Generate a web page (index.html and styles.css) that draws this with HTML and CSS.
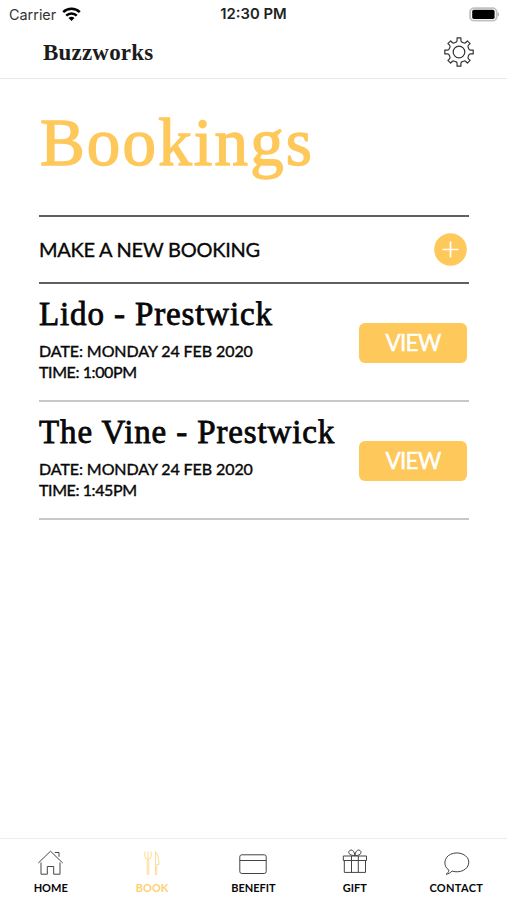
FILE: index.html
```html
<!DOCTYPE html>
<html lang="en">
<head>
<meta charset="utf-8">
<meta name="viewport" content="width=device-width, initial-scale=1">
<title>Buzzworks Bookings</title>
<link rel="stylesheet" href="styles.css">
</head>
<body>
<div class="status">
  <div class="carrier"><span>Carrier</span>
    <svg class="wifi" width="19" height="15" viewBox="0 0 19 15" fill="none" stroke="#000" stroke-width="2.5"><path d="M1.2 5.2C5.8.7 13.2.7 17.8 5.2M4.2 8.6C7.2 5.7 11.8 5.7 14.8 8.6"/><path d="M6.5 11Q9.5 8.5 12.5 11L9.5 14Z" fill="#000" stroke="none"/></svg>
  </div>
  <span class="clock">12:30 PM</span>
  <svg class="battery" width="31" height="15" viewBox="0 0 31 15"><rect x="1.1" y="1.1" width="26.6" height="12.6" rx="4" fill="#fff" stroke="#c2c2c2" stroke-width="1.8"/><rect x="3.2" y="2.7" width="22.4" height="9.4" rx="1.8"/><path d="M28.7 5Q31.3 7.4 28.7 9.8Z" fill="#aaa"/></svg>
</div>
<header class="header">
  <div class="brand">Buzzworks</div>
  <svg class="gear" width="32" height="32" viewBox="-16 -16 32 32" fill="none" stroke="#333" stroke-width="1.2" stroke-linejoin="round"><path d="M-3.3-9.7Q-1.9-10.1-1.9-11.5V-14.2H1.9V-11.5Q1.9-10.1 3.3-9.7L4.5-9.2Q5.8-8.5 6.8-9.5L8.4-11.1L11.1-8.4L9.5-6.8Q8.5-5.8 9.2-4.5L9.7-3.3Q10.1-1.9 11.5-1.9H14.2V1.9H11.5Q10.1 1.9 9.7 3.3L9.2 4.5Q8.5 5.8 9.5 6.8L11.1 8.4L8.4 11.1L6.8 9.5Q5.8 8.5 4.5 9.2L3.3 9.7Q1.9 10.1 1.9 11.5V14.2H-1.9V11.5Q-1.9 10.1-3.3 9.7L-4.5 9.2Q-5.8 8.5-6.8 9.5L-8.4 11.1L-11.1 8.4L-9.5 6.8Q-8.5 5.8-9.2 4.5L-9.7 3.3Q-10.1 1.9-11.5 1.9H-14.2V-1.9H-11.5Q-10.1-1.9-9.7-3.3L-9.2-4.5Q-8.5-5.8-9.5-6.8L-11.1-8.4L-8.4-11.1L-6.8-9.5Q-5.8-8.5-4.5-9.2Z"/><circle r="5.8"/></svg>
</header>
<main class="content">
  <h1 class="title">Bookings</h1>
  <div class="new-booking">
    <span class="new-label">MAKE A NEW BOOKING</span>
    <svg class="plus" width="33" height="33" viewBox="0 0 33 33"><circle cx="16.5" cy="16.5" r="16.3" fill="#fec85a"/><path d="M8.5 16.5H24.5M16.5 8.5V24.5" stroke="#fff" stroke-width="1.7"/></svg>
  </div>
  <section class="booking">
    <div class="details">
      <h2 class="venue">Lido - Prestwick</h2>
      <p class="date">DATE: MONDAY 24 FEB 2020</p>
      <p class="time">TIME: 1:00PM</p>
    </div>
    <div class="view">VIEW</div>
  </section>
  <section class="booking">
    <div class="details">
      <h2 class="venue">The Vine - Prestwick</h2>
      <p class="date">DATE: MONDAY 24 FEB 2020</p>
      <p class="time">TIME: 1:45PM</p>
    </div>
    <div class="view">VIEW</div>
  </section>
</main>
<nav class="tabs">
  <div class="tab"><svg width="28" height="28" viewBox="0 0 28 28"><path d="M1.3 14L13.5 2.2L25.7 14M4 13.5V25.2H10.3V17.5H16.7V25.2H23V13.5M17.8 3.5H22V7.8"/></svg><span>HOME</span></div>
  <div class="tab active"><svg width="28" height="28" viewBox="0 0 28 28"><path d="M6.8 2.5V7.5Q7 10 10 10.5Q13 10 13.2 7.5V2.5M10 2.5V10.5M9.2 10.5V25.2H10.8V10.5M17.5 25.5V2.5Q20.8 6 21 15.5H18.8V25.5Z"/></svg><span>BOOK</span></div>
  <div class="tab"><svg width="28" height="28" viewBox="0 0 28 28"><rect x=".8" y="5.8" width="26.4" height="18.7" rx="2"/><path d="M.8 11.5H27.2"/></svg><span>BENEFIT</span></div>
  <div class="tab"><svg width="28" height="28" viewBox="0 0 28 28"><path d="M2.3 7H25.5V11.5H2.3ZM3.3 11.5V23.4H24.5V11.5M10.5 7V23.4M17.3 7V23.4M13.9 6.5C9.5 6.7 7 4.6 8 2.3C9.8-.4 13.3 1.1 13.9 6.5C14.5 1.1 18-.4 19.8 2.3C20.8 4.6 18.3 6.7 13.9 6.5"/></svg><span>GIFT</span></div>
  <div class="tab"><svg class="bubble" width="28" height="28" viewBox="0 0 28 28"><path d="M6 21.2C-.2 17.3.8 8.4 7.5 5.3C16 1.4 26 6.3 25.8 13.3C25.6 20.7 16.8 24.5 9.1 22.1C7.5 23.7 5.4 25 3.1 25.3C4.8 24 5.8 22.6 6 21.2Z"/></svg><span class="contact">CONTACT</span></div>
</nav>
</body>
</html>
```
FILE: styles.css
```css
* { box-sizing: border-box; }
body { margin: 0; height: 900px; display: flex; flex-direction: column; overflow: hidden; background: #fff; color: #080808; font-family: Lato, sans-serif; }
h1, h2, p { margin: 0; font-weight: 400; white-space: nowrap; }
svg { display: block; flex-shrink: 0; }
.status { height: 27px; display: grid; grid-template-columns: 1fr auto 1fr; align-items: center; padding: 0 7px 0 9px; font: 400 14.4px/27px Inter, sans-serif; }
.carrier { display: flex; gap: 6px; align-items: center; color: #333; }
.clock { font-weight: 600; font-size: 14.8px; line-height: 28px; color: #222; margin-right: 2px; }
.battery { justify-self: end; }
.header { height: 52px; border-bottom: 1px solid #e7e7e7; display: flex; justify-content: space-between; padding: 9px 32px 0 43px; }
.brand { font: 700 23px/34px "Liberation Serif", serif; letter-spacing: .2px; color: #1c1c1c; }
.content { flex: 1; padding: 0 38px 0 39px; }
.title { height: 136px; padding: 23px 0 0 1px; font: 400 67px/80px "Liberation Serif", serif; letter-spacing: 2.15px; color: #fec85a; -webkit-text-stroke: 1.4px #fec85a; }
.new-booking { height: 69px; border-top: 2px solid #606060; border-bottom: 2px solid #606060; display: flex; align-items: center; justify-content: space-between; padding-right: 2px; }
.new-label { font-size: 20px; line-height: 28px; margin-top: -1px; letter-spacing: -.25px; -webkit-text-stroke: .35px; }
.booking { height: 118px; border-bottom: 2px solid #c8c8c8; display: flex; justify-content: space-between; padding-right: 2px; }
.venue { font: 400 33px/40px "Liberation Serif", serif; letter-spacing: .87px; padding-top: 10px; height: 56px; -webkit-text-stroke: .8px; }
.date, .time { font-size: 16px; line-height: 21px; letter-spacing: -.08px; -webkit-text-stroke: .4px; }
.time { letter-spacing: -.4px; }
.view { width: 108px; height: 40px; margin-top: 38.5px; border-radius: 6px; background: #fec85a; color: #fff; text-align: center; font-size: 22.5px; letter-spacing: -.7px; line-height: 40px; -webkit-text-stroke: .5px; }
.tabs { height: 62px; border-top: 1px solid #ececec; display: grid; grid-template-columns: repeat(5, 1fr); padding-top: 10px; }
.tab { display: flex; flex-direction: column; align-items: center; font-size: 11px; font-weight: 700; line-height: 14px; }
.tab svg { fill: none; stroke: #444; stroke-width: 1; stroke-linejoin: round; margin-bottom: 4px; }
.contact { letter-spacing: .3px; }
.tab.active { color: #ffd070; }
.tab.active svg { stroke: #ffd27c; stroke-width: .8; }
.tab .bubble { margin-left: 2px; }
```
